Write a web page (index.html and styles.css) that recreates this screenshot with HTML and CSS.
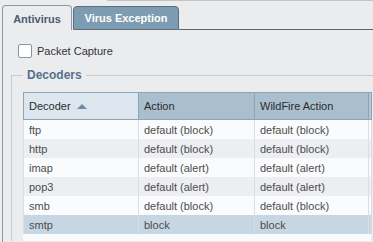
FILE: index.html
```html
<!DOCTYPE html>
<html>
<head>
<meta charset="utf-8">
<link rel="stylesheet" href="styles.css">
</head>
<body>
<div class="topline"></div>
<div class="tabs">
  <div class="tab active">Antivirus</div>
  <div class="tab other">Virus Exception</div>
  <div class="tabfill"></div>
</div>
<div class="panel">
  <label class="check-row"><span class="box"></span><span>Packet Capture</span></label>
  <fieldset class="group">
    <legend>Decoders</legend>
    <div class="grid">
      <table>
        <colgroup><col class="c1"><col class="c2"><col class="c3"><col class="c4"></colgroup>
        <thead>
          <tr><th class="sorted">Decoder <span class="arrow"></span></th><th>Action</th><th>WildFire Action</th><th class="end"></th></tr>
        </thead>
        <tbody>
          <tr><td>ftp</td><td>default (block)</td><td>default (block)</td><td class="end"></td></tr>
          <tr class="alt"><td>http</td><td>default (block)</td><td>default (block)</td><td class="end"></td></tr>
          <tr><td>imap</td><td>default (alert)</td><td>default (alert)</td><td class="end"></td></tr>
          <tr class="alt"><td>pop3</td><td>default (alert)</td><td>default (alert)</td><td class="end"></td></tr>
          <tr><td>smb</td><td>default (block)</td><td>default (block)</td><td class="end"></td></tr>
          <tr class="sel"><td>smtp</td><td>block</td><td>block</td><td class="end"></td></tr>
        </tbody>
      </table>
    </div>
  </fieldset>
</div>
</body>
</html>
```
FILE: styles.css
```css
html, body { margin: 0; padding: 0; }
body {
  background: #ebecee;
  font-family: "Liberation Sans", Arial, sans-serif;
  font-size: 11px;
  color: #333;
  width: 373px;
  height: 242px;
  overflow: hidden;
}
.topline {
  margin-left: 107px;
  height: 0;
  border-top: 1px solid #c3c4c6;
}
.tabs {
  display: flex;
  align-items: flex-end;
  padding-left: 2px;
  margin-top: 4px;
}
.tab {
  box-sizing: border-box;
  font-weight: bold;
  font-size: 11px;
  border-radius: 4px 4px 0 0;
  display: flex;
  align-items: center;
  justify-content: center;
}
.tab.active {
  width: 70px;
  height: 25px;
  background: #ebecee;
  border: 1px solid #8f99a3;
  border-bottom: none;
  color: #4c5c6e;
  padding-top: 1px;
}
.tab.other {
  width: 106px;
  height: 24px;
  background: #7d9cb2;
  border: 1px solid #5a6d7d;
  color: #fff;
  margin-left: 1px;
}
.tabfill {
  flex: 1;
  border-bottom: 1px solid #5b6570;
}
.panel {
  margin-left: 2px;
  border-left: 1px solid #8f99a3;
  padding: 14px 0 0 8px;
  height: 198px;
  overflow: hidden;
}
.check-row {
  display: flex;
  align-items: center;
  padding-left: 7px;
  height: 14px;
  color: #333;
}
.box {
  box-sizing: border-box;
  width: 14px;
  height: 14px;
  background: #fff;
  border: 1px solid #8c949c;
  border-radius: 2px;
  margin-right: 5px;
}
.group {
  margin: 10px 0 0 0;
  padding: 10px 0 0 11px;
  border: 1px solid #c9ccd0;
  border-right: none;
  border-bottom: none;
  min-width: 0;
}
.group legend {
  padding: 0 4px;
  font-weight: bold;
  font-size: 12px;
  color: #55718c;
  line-height: 14px;
}
.grid {
  width: 348px;
  background: #fafbfc;
  height: 149px;
}
table {
  border-collapse: collapse;
  table-layout: fixed;
  width: 348px;
}
col.c1 { width: 115px; }
col.c2 { width: 116px; }
col.c3 { width: 114px; }
col.c4 { width: 3px; }
th {
  height: 26px;
  background: #a9bfce;
  font-weight: normal;
  text-align: left;
  padding: 0 0 0 5px;
  color: #2b2b2b;
  border: 1px solid #8ea4b5;
  white-space: nowrap;
}
th.sorted { background: #dde6ee; }
th.end { padding: 0; background: #b6c8d5; }
.arrow {
  display: inline-block;
  width: 0;
  height: 0;
  border-left: 5px solid transparent;
  border-right: 5px solid transparent;
  border-bottom: 5px solid #6d8aa6;
  margin-left: 3px;
  vertical-align: 1px;
}
td {
  height: 19px;
  padding: 0 0 0 5px;
  color: #4d4d4d;
  border-right: 1px solid #d9dee3;
  white-space: nowrap;
}
td:first-child { border-left: 1px solid #d9dee3; }
td.end { padding: 0; }
tbody tr { background: #fafbfc; }
tbody tr.alt { background: #eceef1; }
tbody tr.sel { background: #c6d6e3; }
```
